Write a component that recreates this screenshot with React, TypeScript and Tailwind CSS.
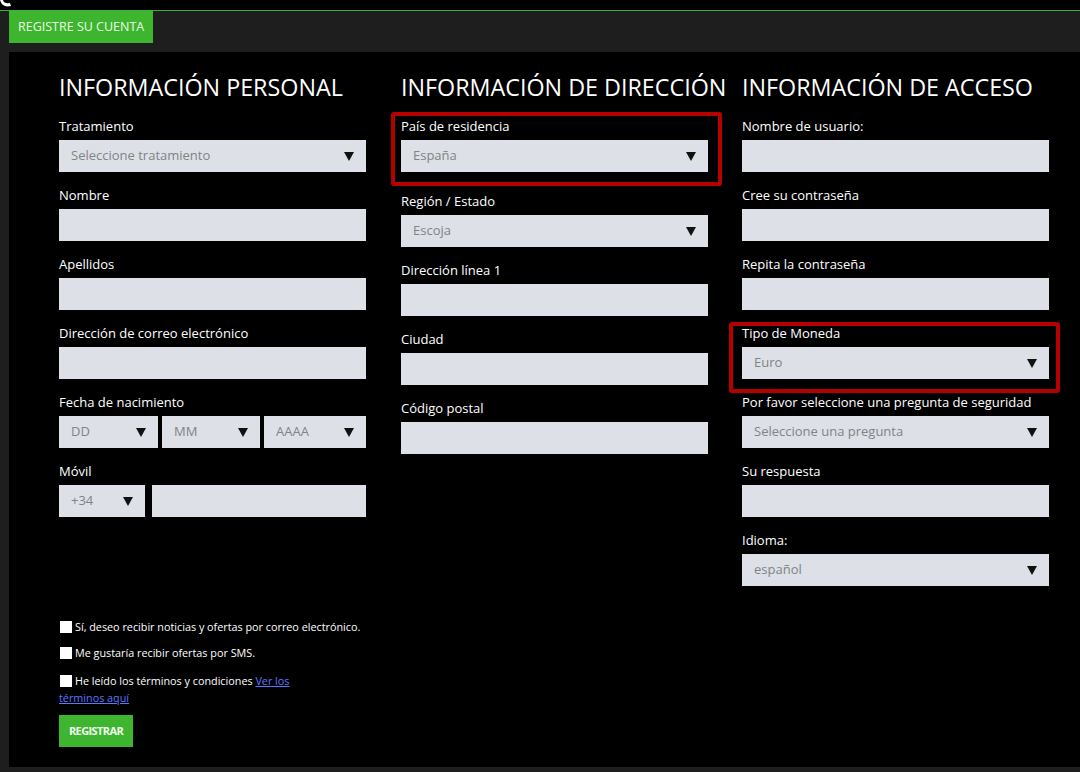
import { ReactNode } from "react"

const font = { fontFamily: '"Open Sans", "Noto Sans", sans-serif' }

function Arrow() {
  return (
    <svg width="10" height="9" viewBox="0 0 10 9" className="shrink-0">
      <path d="M0 0 H10 L5 9 Z" fill="#111" />
    </svg>
  )
}

function Select({ value, className = "" }: { value: string; className?: string }) {
  return (
    <div className={`h-8 bg-[#dde0e6] flex items-center justify-between pl-3 pr-3 ${className}`}>
      <span className="text-[13px] text-[#818387]">{value}</span>
      <Arrow />
    </div>
  )
}

function Input({ className = "" }: { className?: string }) {
  return <div className={`h-8 bg-[#dde0e6] ${className}`} />
}

function Field({ label, children, className = "" }: { label: string; children: ReactNode; className?: string }) {
  return (
    <div className={`flex flex-col ${className}`}>
      <label className="text-[13px] leading-5 text-white mb-1">{label}</label>
      {children}
    </div>
  )
}

function Heading({ children }: { children: ReactNode }) {
  return <h2 className="text-[23.3px] leading-8 text-white whitespace-nowrap mb-[13px]">{children}</h2>
}

function Check({ children }: { children: ReactNode }) {
  return (
    <div className="flex items-start gap-[3px] text-[10.8px] leading-[17px] text-white whitespace-nowrap">
      <span className="w-3 h-3 bg-white shrink-0 mt-[3px] ml-px" />
      <span>{children}</span>
    </div>
  )
}

export default function App() {
  return (
    <div style={font} className="w-[1080px] h-[772px] bg-[#1e1e1e] flex flex-col overflow-hidden">
      <div className="h-[10px] bg-black border-b border-[#3fae35] box-content relative">
        <svg width="14" height="9" viewBox="0 0 14 9" className="absolute left-0 top-0">
          <path d="M0 0 Q2 8 11 6 L10 3 Q4 4 3 0 Z" fill="#fff" />
        </svg>
      </div>
      <div className="pl-[9px] flex-1 flex flex-col">
        <div className="h-8 w-[144px] bg-[#3db52f] flex items-center pl-[9px] text-[12.5px] text-[#e9ffe4] uppercase">
          Registre su cuenta
        </div>
        <div className="mt-[9px] h-[715px] bg-black pl-[50px] pt-[19px]">
          <div className="flex">
            {/* personal */}
            <div className="w-[307px] flex flex-col">
              <Heading>INFORMACIÓN PERSONAL</Heading>
              <div className="flex flex-col gap-[13px]">
                <Field label="Tratamiento"><Select value="Seleccione tratamiento" /></Field>
                <Field label="Nombre"><Input /></Field>
                <Field label="Apellidos"><Input /></Field>
                <Field label="Dirección de correo electrónico"><Input /></Field>
                <Field label="Fecha de nacimiento">
                  <div className="flex gap-[4px]">
                    <Select value="DD" className="w-[99px]" />
                    <Select value="MM" className="w-[98px]" />
                    <Select value="AAAA" className="flex-1" />
                  </div>
                </Field>
                <Field label="Móvil">
                  <div className="flex gap-[7px]">
                    <Select value="+34" className="w-[86px]" />
                    <Input className="flex-1" />
                  </div>
                </Field>
              </div>
            </div>
            {/* direccion */}
            <div className="w-[307px] ml-[35px] flex flex-col">
              <Heading>INFORMACIÓN DE DIRECCIÓN</Heading>
              <div className="flex flex-col gap-[13px]">
                <div className="relative">
                  <Field label="País de residencia"><Select value="España" /></Field>
                  <div className="absolute -left-[10px] -right-[14px] -top-[4px] -bottom-[14px] border-4 border-[#b50000] rounded-[3px]" />
                </div>
                <Field label="Región / Estado" className="mt-[6px]"><Select value="Escoja" /></Field>
                <Field label="Dirección línea 1"><Input /></Field>
                <Field label="Ciudad"><Input /></Field>
                <Field label="Código postal"><Input /></Field>
              </div>
            </div>
            {/* acceso */}
            <div className="w-[307px] ml-[34px] flex flex-col">
              <Heading>INFORMACIÓN DE ACCESO</Heading>
              <div className="flex flex-col gap-[13px]">
                <Field label="Nombre de usuario:"><Input /></Field>
                <Field label="Cree su contraseña"><Input /></Field>
                <Field label="Repita la contraseña"><Input /></Field>
                <div className="relative">
                  <Field label="Tipo de Moneda"><Select value="Euro" /></Field>
                  <div className="absolute -left-[13px] -right-[11px] -top-[1px] -bottom-[14px] border-4 border-[#b50000] rounded-[3px]" />
                </div>
                <Field label="Por favor seleccione una pregunta de seguridad"><Select value="Seleccione una pregunta" /></Field>
                <Field label="Su respuesta"><Input /></Field>
                <Field label="Idioma:"><Select value="español" /></Field>
              </div>
            </div>
          </div>
          <div className="mt-[32px] flex flex-col gap-[9px]">
            <Check>Sí, deseo recibir noticias y ofertas por correo electrónico.</Check>
            <Check>Me gustaría recibir ofertas por SMS.</Check>
            <div className="w-[236px] text-[10.8px] leading-[17px] text-white mt-[2px]">
              <span className="inline-block w-3 h-3 bg-white align-[-2px] ml-px mr-[3px]" />
              He leído los términos y condiciones{" "}
              <a className="text-[#5a78ff] underline">Ver los términos aquí</a>
            </div>
          </div>
          <button className="mt-[9px] h-8 w-[74px] bg-[#3db52f] text-[11px] font-bold text-[#f0fff0] tracking-[-0.6px]">
            REGISTRAR
          </button>
        </div>
      </div>
    </div>
  )
}
